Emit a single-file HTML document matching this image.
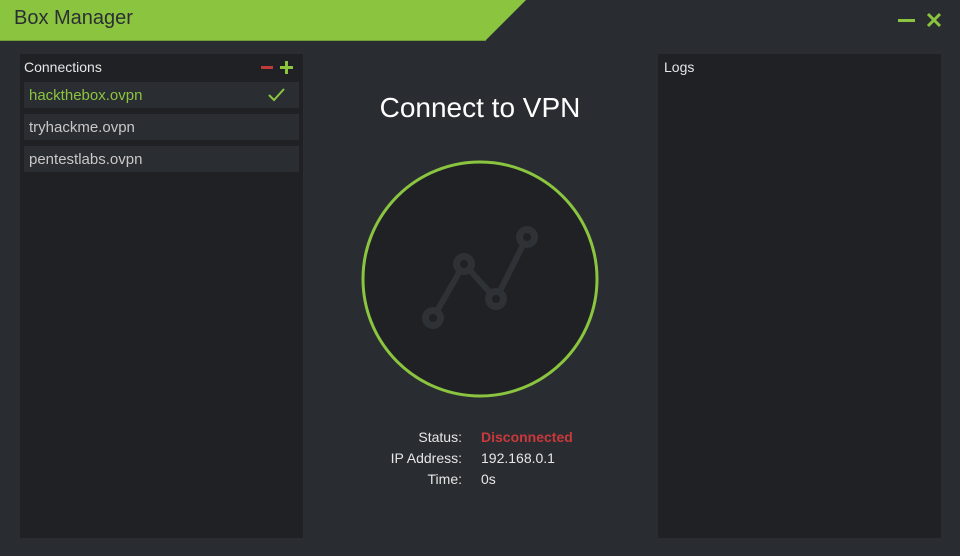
<!DOCTYPE html>
<html><head><style>
body{margin:0;width:960px;height:556px;background:#292d32;font-family:"Liberation Sans",sans-serif;position:relative;overflow:hidden}
.abs{position:absolute}
.panel{background:#1f2125}
.item{position:absolute;left:24px;width:275px;height:26px;background:#2a2d32;font-size:15px;line-height:28px;padding-left:5px;box-sizing:border-box;color:#c8c8c8}
.lbl{position:absolute;font-size:14px;color:#e6e6e6}
</style></head><body>
<svg class="abs" style="left:0;top:0" width="960" height="42">
<polygon points="0,0 526,0 486,40 0,40" fill="#8bc53f"/>
<rect x="0" y="40" width="486" height="1" fill="#6f9e34"/>
<rect x="898" y="19" width="17" height="3" fill="#8bc53f"/>
<path d="M928 14 L940 26 M940 14 L928 26" stroke="#8bc53f" stroke-width="3"/>
</svg>
<div class="abs" style="left:14px;top:7px;font-size:20px;color:#2b2f33">Box Manager</div>
<div class="abs panel" style="left:20px;top:54px;width:283px;height:484px"></div>
<div class="abs panel" style="left:658px;top:54px;width:283px;height:484px"></div>
<div class="lbl" style="left:24px;top:59px">Connections</div>
<div class="lbl" style="left:664px;top:59px">Logs</div>
<svg class="abs" style="left:258px;top:58px" width="40" height="18">
<rect x="3" y="8" width="12" height="3" fill="#c0393b"/>
<rect x="22" y="8" width="13" height="3" fill="#8bc53f"/><rect x="27" y="3" width="3" height="13" fill="#8bc53f"/>
</svg>
<div class="item" style="top:82px;color:#8bc53f">hackthebox.ovpn</div>
<svg class="abs" style="left:266px;top:86px" width="22" height="18"><path d="M3 9 L8 14 L18 3" stroke="#8bc53f" stroke-width="2" fill="none"/></svg>
<div class="item" style="top:114px">tryhackme.ovpn</div>
<div class="item" style="top:146px">pentestlabs.ovpn</div>
<div class="abs" style="left:330px;width:300px;text-align:center;top:92px;font-size:28px;color:#fff">Connect to VPN</div>
<svg class="abs" style="left:0;top:0" width="960" height="556">
<circle cx="480" cy="279" r="117" fill="#1f2125" stroke="#8bc53f" stroke-width="3"/>
<path d="M433 318 L464 264 L496 299 L527 237" stroke="#2e3136" stroke-width="6" fill="none"/>
<g fill="#1f2125" stroke="#2e3136" stroke-width="7">
<circle cx="433" cy="318" r="7.5"/><circle cx="464" cy="264" r="7.5"/><circle cx="496" cy="299" r="7.5"/><circle cx="527" cy="237" r="7.5"/></g>
</svg>
<div class="abs" style="left:330px;width:132px;text-align:right;top:427px;font-size:14px;line-height:21px;color:#e6e6e6">Status:<br>IP Address:<br>Time:</div>
<div class="abs" style="left:481px;top:427px;font-size:14px;line-height:21px;color:#e6e6e6"><b style="color:#c9383a">Disconnected</b><br>192.168.0.1<br>0s</div>
</body></html>
